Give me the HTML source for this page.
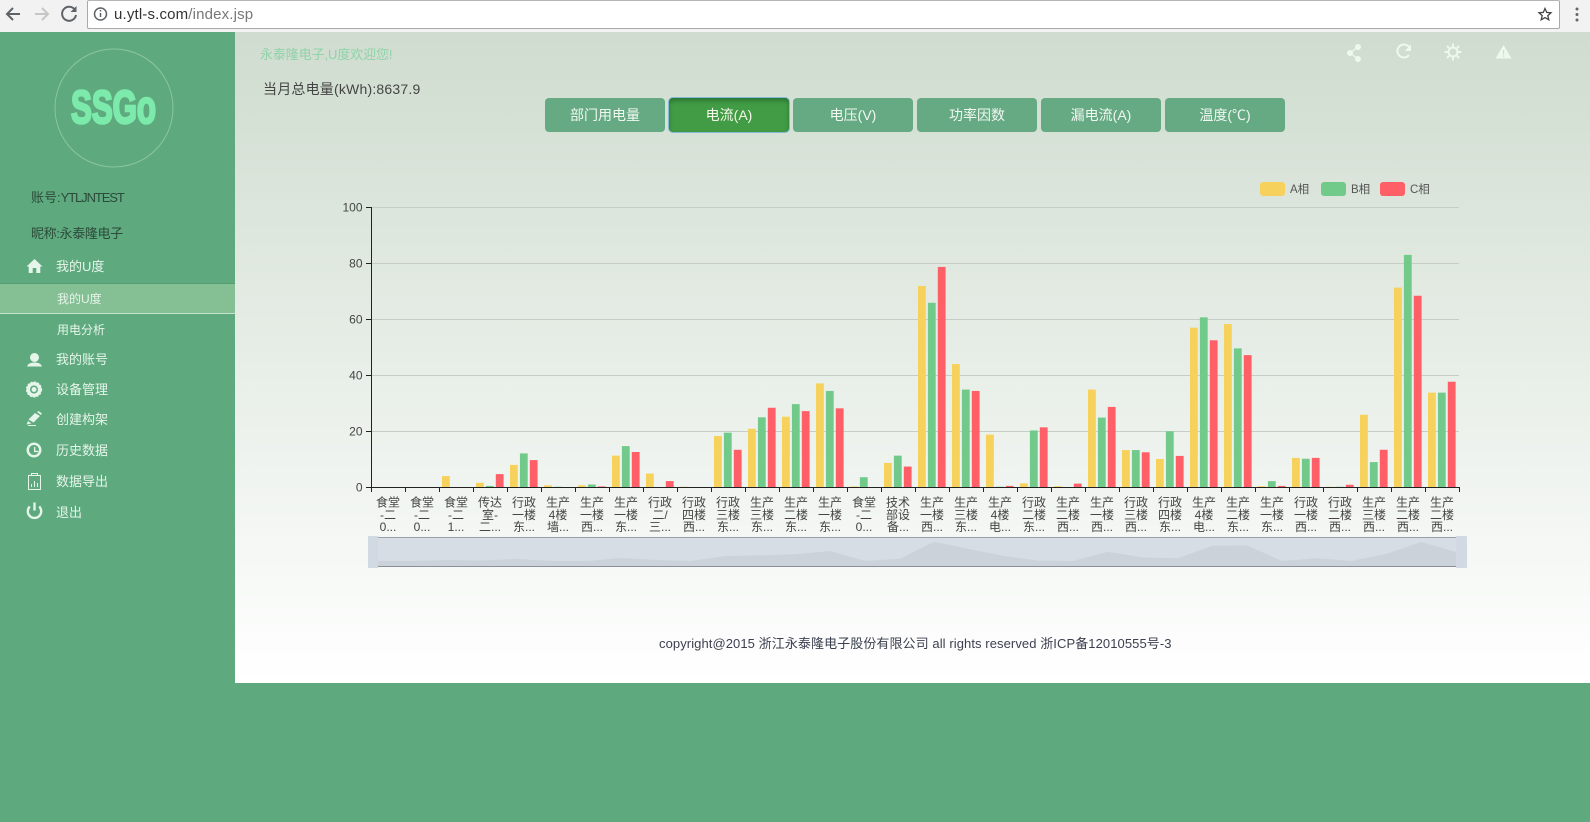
<!DOCTYPE html>
<html lang="zh"><head><meta charset="utf-8"><title>u.ytl-s.com</title>
<style>
html,body{margin:0;padding:0;width:1590px;height:822px;overflow:hidden;background:#5eaa7e;font-family:"Liberation Sans","Noto Sans CJK SC",sans-serif}
.t{position:absolute;white-space:nowrap;line-height:18px}
#bar{position:absolute;left:0;top:0;width:1590px;height:32px;background:#f2f2f2}
#url{position:absolute;left:87px;top:0;width:1471px;height:27px;background:#fff;border:1px solid #a9a9a9;border-top-color:#b5b5b5;border-radius:2px;box-sizing:content-box}
#main{position:absolute;left:235px;top:32px;width:1355px;height:651px;background:linear-gradient(#cfdccf,#fff)}
#side{position:absolute;left:0;top:32px;width:235px;height:790px;background:#5eaa7e}
.m{color:#e6f5ea;font-size:13px;left:56px}
.s{color:#e6f5ea;font-size:12px;left:57px}
.btn{position:absolute;top:98px;width:120px;height:34px;line-height:34px;border-radius:4px;background:#66aa84;color:#f1f8f2;text-align:center;font-size:14px}
.on{background:#419c45;box-shadow:0 0 0 1px #86b7d8,inset 0 3px 4px rgba(0,50,20,.35);color:#f4f8e8}
svg{position:absolute;overflow:visible}
.a{fill:#f6d25c;width:7.8px}.b{fill:#72ca8a;width:7.8px}.c{fill:#ff5f66;width:7.8px}
.lb text{font-size:12px;fill:#444;text-anchor:middle}
</style></head><body>
<div id="bar"></div>
<div id="url"></div>
<svg style="left:0;top:0" width="1590" height="32" viewBox="0 0 1590 32" fill="none">
<path d="M20 14H7M13 8l-6 6 6 6" stroke="#5f6368" stroke-width="2"/>
<path d="M35 14h13M42 8l6 6-6 6" stroke="#c6c6c6" stroke-width="2"/>
<path d="M75 10a7 7 0 1 0 1 5" stroke="#5f6368" stroke-width="2"/><path d="M76.500 6v6h-6z" fill="#5f6368"/>
<circle cx="100.500" cy="14" r="6" stroke="#5f6368" stroke-width="1.500"/><path d="M100.500 13v4M100.500 10v1.500" stroke="#5f6368" stroke-width="1.500"/>
<path d="M1545 8.500l1.700 3.900 4.300.4-3.200 2.800 1 4.200-3.800-2.200-3.800 2.200 1-4.200-3.200-2.800 4.300-.4z" stroke="#444" stroke-width="1.300"/>
<circle cx="1577" cy="9" r="1.500" fill="#666"/><circle cx="1577" cy="14.500" r="1.500" fill="#666"/><circle cx="1577" cy="20" r="1.500" fill="#666"/>
</svg>
<div class="t" style="left:114px;top:5.500px;font-size:15px;letter-spacing:.16px;color:#333">u.ytl-s.com<span style="color:#777">/index.jsp</span></div>

<div id="main"></div>
<div id="side"></div>

<svg style="left:0;top:0" width="235" height="540" viewBox="0 0 235 540">
<circle cx="114" cy="108" r="59" fill="none" stroke="#8cc4a2" stroke-width="1"/>
<text x="71" y="123" font-family="Liberation Sans" font-weight="700" font-size="46" textLength="85" lengthAdjust="spacingAndGlyphs" fill="#7beaaa" stroke="#7beaaa" stroke-width="2.600">SSGo</text>
<rect x="0" y="283" width="235" height="30" fill="#85bf94"/>
<rect x="0" y="283" width="235" height="1" fill="#559b72"/>
<rect x="0" y="313" width="235" height="1" fill="#c4e2cc"/>
<g fill="#e6f5ea">
<path d="M34.500 259l8 7.500h-2.200v6.500h-4v-5h-3.600v5h-4v-6.500h-2.200z"/>
<circle cx="34.500" cy="357.500" r="4.500"/><path d="M27 366.500c1-3 4-4 7.500-4s6.500 1 7.500 4z"/>
<path fill-rule="evenodd" d="M34 382a7.500 7.500 0 1 0 .01 0zM34 385.500a4 4 0 1 1-.01 0z"/><circle cx="34" cy="389.500" r="2.500"/>
<path d="M35 413l5 3-6.500 6.500-5-3zM37 412l1.500-1 3.500 2.500-1 1.500zM28 421l3.500 2.500-5 1z"/><rect x="28" y="425" width="8" height="1"/>
<path fill-rule="evenodd" d="M34 442.500a7.500 7.500 0 1 0 .01 0zM34 445a5 5 0 1 1-.01 0z"/><path d="M34 447h1.300v3.800h3v1.300h-4.300z"/>
</g>
<circle cx="34" cy="389.500" r="7.500" fill="none" stroke="#e6f5ea" stroke-width="1.200" stroke-dasharray="2 1.500"/>
<g fill="none" stroke="#e6f5ea">
<rect x="28.500" y="475.500" width="12" height="14"/><path d="M31.500 475.500v-2h6v2M31.500 487v-3M34.500 487v-6M37.500 487v-4"/>
<path d="M29.800 506.500a6.700 6.700 0 1 0 9.400 0" stroke-width="2.400"/><path d="M34.500 502.500v8" stroke-width="2.400"/>
</g>
</svg>
<div class="t" style="left:31px;top:189px;font-size:13px;color:#2b4a3a">账号:<span style="letter-spacing:-1.100px">YTLJNTEST</span></div>
<div class="t" style="left:31px;top:225px;font-size:13px;letter-spacing:-.35px;color:#2b4a3a">昵称:永泰隆电子</div>
<div class="t m" style="top:258px">我的U度</div>
<div class="t s" style="top:290px">我的U度</div>
<div class="t s" style="top:321px">用电分析</div>
<div class="t m" style="top:351px">我的账号</div>
<div class="t m" style="top:381px">设备管理</div>
<div class="t m" style="top:411px">创建构架</div>
<div class="t m" style="top:442px">历史数据</div>
<div class="t m" style="top:473px">数据导出</div>
<div class="t m" style="top:504px">退出</div>

<div class="t" style="left:260px;top:46px;font-size:13px;letter-spacing:-.1px;color:#8fd3a8">永泰隆电子,U度欢迎您!</div>
<div class="t" style="left:263px;top:79.500px;font-size:14px;letter-spacing:.2px;color:#444">当月总电量(kWh):8637.9</div>

<svg style="left:1340px;top:40px" width="180" height="26" viewBox="1340 40 180 26" fill="#edf8ef">
<circle cx="1358" cy="47" r="3"/><circle cx="1350" cy="53" r="3"/><circle cx="1358" cy="59" r="3"/><path d="M1358 47l-8 6 8 6" fill="none" stroke="#edf8ef" stroke-width="1.300"/>
<path d="M1409 47a6.500 6.500 0 1 0 0 8" fill="none" stroke="#edf8ef" stroke-width="2"/><path d="M1411 44v7h-6z"/>
<circle cx="1453" cy="52" r="4.500" fill="none" stroke="#edf8ef" stroke-width="2"/><path d="M1453 43.500v3M1453 57.500v3M1444.500 52h3M1458.500 52h3M1447 46l2 2M1457 56l2 2M1459 46l-2 2M1449 56l-2 2" stroke="#edf8ef" stroke-width="2"/>
<path fill-rule="evenodd" d="M1503.500 45l8 13.500h-16zM1502.800 50v4.500h1.400v-4.500zM1502.800 55.500v1.400h1.400v-1.400z"/>
</svg>

<div class="btn" style="left:545px">部门用电量</div>
<div class="btn on" style="left:669px">电流(A)</div>
<div class="btn" style="left:793px">电压(V)</div>
<div class="btn" style="left:917px">功率因数</div>
<div class="btn" style="left:1041px">漏电流(A)</div>
<div class="btn" style="left:1165px">温度(℃)</div>

<svg style="left:0;top:0" width="1590" height="683" viewBox="0 0 1590 683">
<!-- legend -->
<rect x="1260" y="182" width="25" height="14" rx="3" fill="#f6d25c"/><text x="1290" y="193" font-size="11.500" fill="#555">A相</text>
<rect x="1321" y="182" width="25" height="14" rx="3" fill="#72ca8a"/><text x="1351" y="193" font-size="11.500" fill="#555">B相</text>
<rect x="1380" y="182" width="25" height="14" rx="3" fill="#ff5f66"/><text x="1410" y="193" font-size="11.500" fill="#555">C相</text>
<!-- grid -->
<path d="M371 207.500H1459M371 263.500H1459M371 319.500H1459M371 375.500H1459M371 431.500H1459" stroke="#c6ccc6" stroke-width="1" fill="none"/>
<!-- bars: x offset per category; height = value -->
<g transform="translate(374,487) scale(1,-2.8)">
<g transform="translate(68)"><rect class="a" height="3.9"/></g>
<g transform="translate(102)"><rect class="a" height="1.5"/><rect class="b" x="9.9" height=".4"/><rect class="c" x="19.8" height="4.6"/></g>
<g transform="translate(136)"><rect class="a" height="7.9"/><rect class="b" x="9.9" height="12"/><rect class="c" x="19.8" height="9.6"/></g>
<g transform="translate(170)"><rect class="a" height=".6"/><rect class="b" x="9.9" height=".1"/></g>
<g transform="translate(204)"><rect class="a" height=".6"/><rect class="b" x="9.9" height=".9"/><rect class="c" x="19.8" height=".2"/></g>
<g transform="translate(238)"><rect class="a" height="11.2"/><rect class="b" x="9.9" height="14.6"/><rect class="c" x="19.8" height="12.5"/></g>
<g transform="translate(272)"><rect class="a" height="4.8"/><rect class="c" x="19.8" height="2.1"/></g>
<g transform="translate(306)"><rect class="a" height=".1"/></g>
<g transform="translate(340)"><rect class="a" height="18.2"/><rect class="b" x="9.9" height="19.4"/><rect class="c" x="19.8" height="13.3"/></g>
<g transform="translate(374)"><rect class="a" height="20.8"/><rect class="b" x="9.9" height="24.9"/><rect class="c" x="19.8" height="28.3"/></g>
<g transform="translate(408)"><rect class="a" height="25.1"/><rect class="b" x="9.9" height="29.6"/><rect class="c" x="19.8" height="27.1"/></g>
<g transform="translate(442)"><rect class="a" height="37"/><rect class="b" x="9.9" height="34.3"/><rect class="c" x="19.8" height="28.1"/></g>
<g transform="translate(476)"><rect class="a" height=".2"/><rect class="b" x="9.9" height="3.5"/></g>
<g transform="translate(510)"><rect class="a" height="8.6"/><rect class="b" x="9.9" height="11.2"/><rect class="c" x="19.8" height="7.3"/></g>
<g transform="translate(544)"><rect class="a" height="71.8"/><rect class="b" x="9.9" height="65.8"/><rect class="c" x="19.8" height="78.6"/></g>
<g transform="translate(578)"><rect class="a" height="43.9"/><rect class="b" x="9.9" height="34.8"/><rect class="c" x="19.8" height="34.3"/></g>
<g transform="translate(612)"><rect class="a" height="18.7"/><rect class="b" x="9.9" height=".1"/><rect class="c" x="19.8" height=".4"/></g>
<g transform="translate(646)"><rect class="a" height="1.3"/><rect class="b" x="9.9" height="20.2"/><rect class="c" x="19.8" height="21.3"/></g>
<g transform="translate(680)"><rect class="a" height=".3"/><rect class="c" x="19.8" height="1.2"/></g>
<g transform="translate(714)"><rect class="a" height="34.8"/><rect class="b" x="9.9" height="24.8"/><rect class="c" x="19.8" height="28.6"/></g>
<g transform="translate(748)"><rect class="a" height="13.2"/><rect class="b" x="9.9" height="13.2"/><rect class="c" x="19.8" height="12.4"/></g>
<g transform="translate(782)"><rect class="a" height="10"/><rect class="b" x="9.9" height="19.9"/><rect class="c" x="19.8" height="11.1"/></g>
<g transform="translate(816)"><rect class="a" height="56.9"/><rect class="b" x="9.9" height="60.6"/><rect class="c" x="19.8" height="52.4"/></g>
<g transform="translate(850)"><rect class="a" height="58.2"/><rect class="b" x="9.9" height="49.5"/><rect class="c" x="19.8" height="47.1"/></g>
<g transform="translate(884)"><rect class="a" height=".3"/><rect class="b" x="9.9" height="2.1"/><rect class="c" x="19.8" height=".4"/></g>
<g transform="translate(918)"><rect class="a" height="10.4"/><rect class="b" x="9.9" height="10.1"/><rect class="c" x="19.8" height="10.4"/></g>
<g transform="translate(952)"><rect class="a" height=".1"/><rect class="b" x="9.9" height=".1"/><rect class="c" x="19.8" height=".8"/></g>
<g transform="translate(986)"><rect class="a" height="25.8"/><rect class="b" x="9.9" height="8.9"/><rect class="c" x="19.8" height="13.3"/></g>
<g transform="translate(1020)"><rect class="a" height="71.2"/><rect class="b" x="9.9" height="82.9"/><rect class="c" x="19.8" height="68.3"/></g>
<g transform="translate(1054)"><rect class="a" height="33.7"/><rect class="b" x="9.9" height="33.7"/><rect class="c" x="19.8" height="37.6"/></g>
</g>
<!-- axes -->
<path d="M371.500 207V487.500H1459.500" fill="none" stroke="#222" stroke-width="1"/>
<path d="M366 207.500h5M366 263.500h5M366 319.500h5M366 375.500h5M366 431.500h5M366 487.500h5" stroke="#222" stroke-width="1"/>
<path d="M371.500 487v5M405.500 487v5M439.500 487v5M473.500 487v5M507.500 487v5M541.500 487v5M575.500 487v5M609.500 487v5M643.500 487v5M677.500 487v5M711.500 487v5M745.500 487v5M779.500 487v5M813.500 487v5M847.500 487v5M881.500 487v5M915.500 487v5M949.500 487v5M983.500 487v5M1017.500 487v5M1051.500 487v5M1085.500 487v5M1119.500 487v5M1153.500 487v5M1187.500 487v5M1221.500 487v5M1255.500 487v5M1289.500 487v5M1323.500 487v5M1357.500 487v5M1391.500 487v5M1425.500 487v5M1459.500 487v5" stroke="#222" stroke-width="1"/>
<g font-size="12" fill="#444" text-anchor="end">
<text x="362.500" y="211.500">100</text><text x="362.500" y="267.500">80</text><text x="362.500" y="323.500">60</text><text x="362.500" y="379.500">40</text><text x="362.500" y="435.500">20</text><text x="362.500" y="491.500">0</text>
</g>
<!-- category labels -->
<g class="lb">
<g transform="translate(388)"><text y="506.500">食堂</text><text y="519">-二</text><text y="531">0...</text></g>
<g transform="translate(422)"><text y="506.500">食堂</text><text y="519">-二</text><text y="531">0...</text></g>
<g transform="translate(456)"><text y="506.500">食堂</text><text y="519">-二</text><text y="531">1...</text></g>
<g transform="translate(490)"><text y="506.500">传达</text><text y="519">室-</text><text y="531">二...</text></g>
<g transform="translate(524)"><text y="506.500">行政</text><text y="519">一楼</text><text y="531">东...</text></g>
<g transform="translate(558)"><text y="506.500">生产</text><text y="519">4楼</text><text y="531">墙...</text></g>
<g transform="translate(592)"><text y="506.500">生产</text><text y="519">一楼</text><text y="531">西...</text></g>
<g transform="translate(626)"><text y="506.500">生产</text><text y="519">一楼</text><text y="531">东...</text></g>
<g transform="translate(660)"><text y="506.500">行政</text><text y="519">二/</text><text y="531">三...</text></g>
<g transform="translate(694)"><text y="506.500">行政</text><text y="519">四楼</text><text y="531">西...</text></g>
<g transform="translate(728)"><text y="506.500">行政</text><text y="519">三楼</text><text y="531">东...</text></g>
<g transform="translate(762)"><text y="506.500">生产</text><text y="519">三楼</text><text y="531">东...</text></g>
<g transform="translate(796)"><text y="506.500">生产</text><text y="519">二楼</text><text y="531">东...</text></g>
<g transform="translate(830)"><text y="506.500">生产</text><text y="519">一楼</text><text y="531">东...</text></g>
<g transform="translate(864)"><text y="506.500">食堂</text><text y="519">-二</text><text y="531">0...</text></g>
<g transform="translate(898)"><text y="506.500">技术</text><text y="519">部设</text><text y="531">备...</text></g>
<g transform="translate(932)"><text y="506.500">生产</text><text y="519">一楼</text><text y="531">西...</text></g>
<g transform="translate(966)"><text y="506.500">生产</text><text y="519">三楼</text><text y="531">东...</text></g>
<g transform="translate(1000)"><text y="506.500">生产</text><text y="519">4楼</text><text y="531">电...</text></g>
<g transform="translate(1034)"><text y="506.500">行政</text><text y="519">二楼</text><text y="531">东...</text></g>
<g transform="translate(1068)"><text y="506.500">生产</text><text y="519">二楼</text><text y="531">西...</text></g>
<g transform="translate(1102)"><text y="506.500">生产</text><text y="519">一楼</text><text y="531">西...</text></g>
<g transform="translate(1136)"><text y="506.500">行政</text><text y="519">三楼</text><text y="531">西...</text></g>
<g transform="translate(1170)"><text y="506.500">行政</text><text y="519">四楼</text><text y="531">东...</text></g>
<g transform="translate(1204)"><text y="506.500">生产</text><text y="519">4楼</text><text y="531">电...</text></g>
<g transform="translate(1238)"><text y="506.500">生产</text><text y="519">二楼</text><text y="531">东...</text></g>
<g transform="translate(1272)"><text y="506.500">生产</text><text y="519">一楼</text><text y="531">东...</text></g>
<g transform="translate(1306)"><text y="506.500">行政</text><text y="519">一楼</text><text y="531">西...</text></g>
<g transform="translate(1340)"><text y="506.500">行政</text><text y="519">二楼</text><text y="531">西...</text></g>
<g transform="translate(1374)"><text y="506.500">生产</text><text y="519">三楼</text><text y="531">西...</text></g>
<g transform="translate(1408)"><text y="506.500">生产</text><text y="519">二楼</text><text y="531">西...</text></g>
<g transform="translate(1442)"><text y="506.500">生产</text><text y="519">二楼</text><text y="531">西...</text></g>
</g>
<!-- data zoom -->
<rect x="378" y="537" width="1078" height="29" fill="#d6dde5"/>
<polygon fill="#cbd2da" points="378,566 378,561 413,561 448,560 482,560.600 517,559 552,561 587,561 621,558 656,560 691,561 726,556 760,555.400 795,554.300 830,551 865,561 900,558.700 934,541.800 969,549 1004,556 1039,560.600 1073,561 1108,551.700 1143,557.500 1178,558.300 1212,545.800 1247,545.400 1282,561 1317,558.200 1351,561 1386,554 1421,542 1456,552 1456,566"/>
<path d="M378 537.500H1456" stroke="#9aa1a9" stroke-width="1"/>
<path d="M378 566.500H1456" stroke="#8a9096" stroke-width="1"/>
<rect x="368" y="536" width="10" height="32" fill="#d1dae3"/>
<rect x="1456" y="536" width="11" height="32" fill="#d1dae3"/>
</svg>

<div class="t" style="left:659px;top:634.500px;font-size:13px;letter-spacing:.08px;color:#3c3f50">copyright@2015 浙江永泰隆电子股份有限公司 all rights reserved 浙ICP备12010555号-3</div>
</body></html>
